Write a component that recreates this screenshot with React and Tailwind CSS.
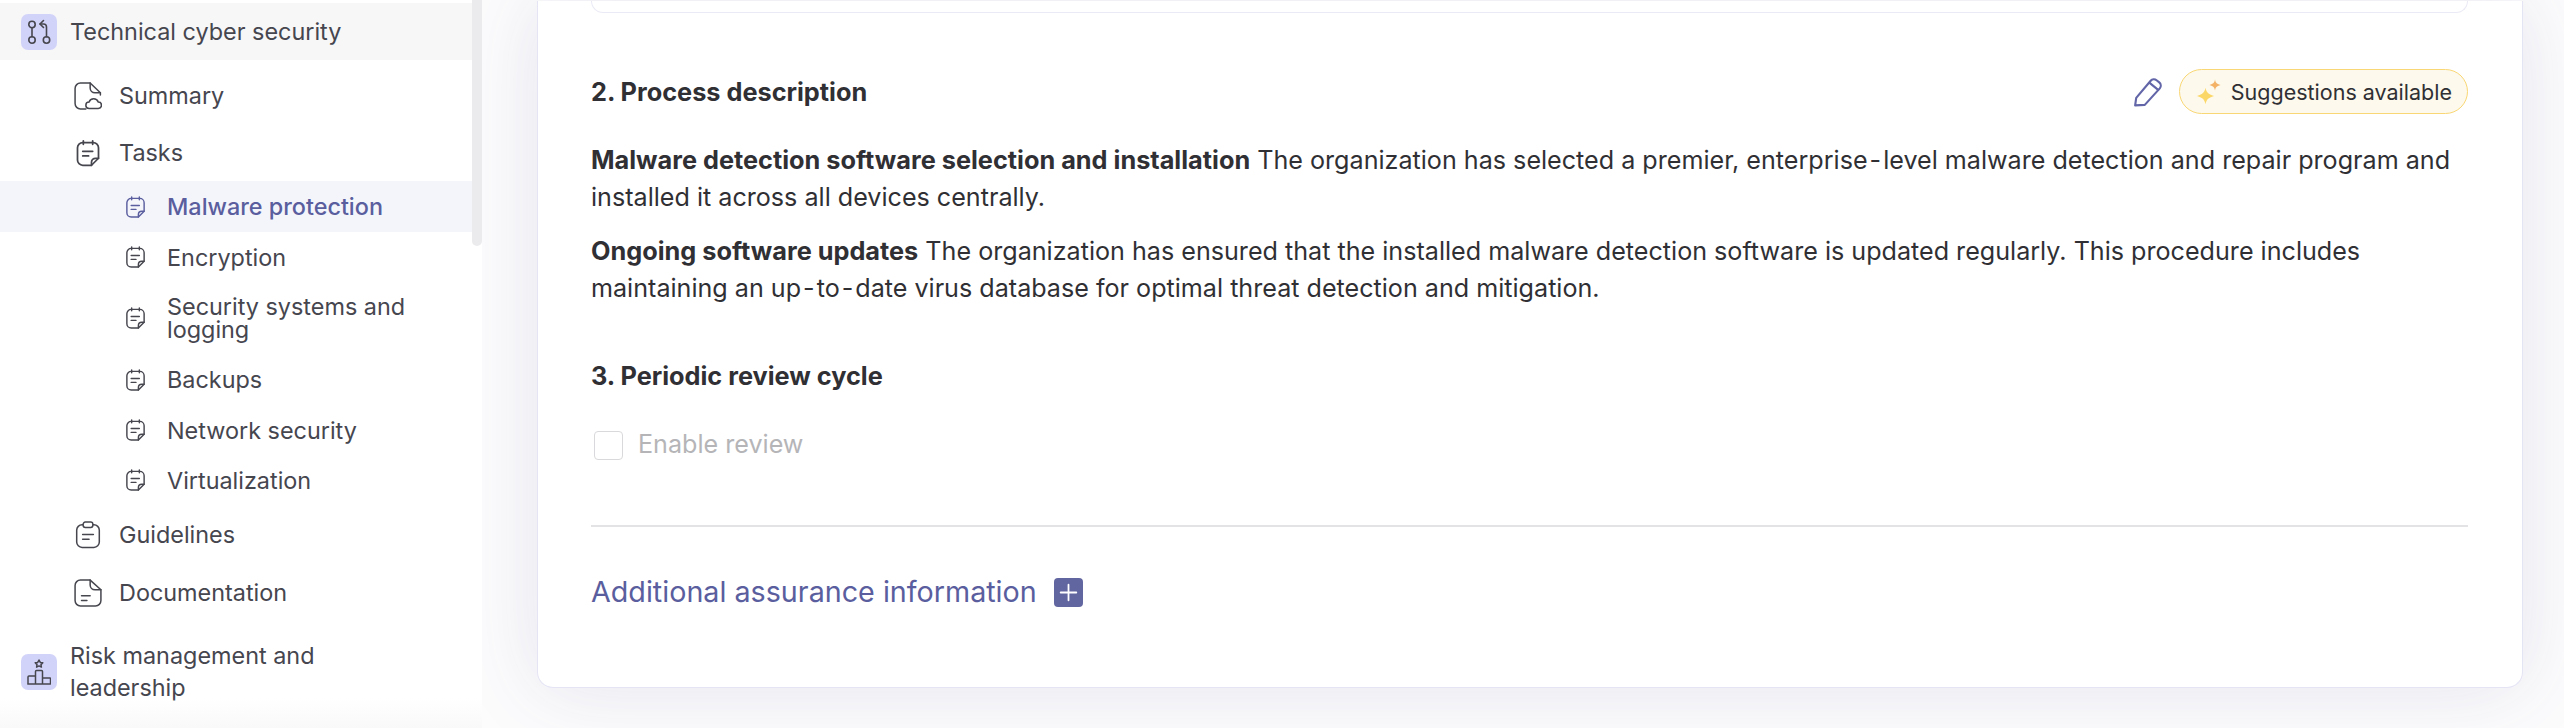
import React from 'react';

const NoteIcon = ({ className }) => (
  <svg className={className} viewBox="0 0 24 24" fill="none" stroke="currentColor" strokeWidth="1.5" strokeLinecap="round" strokeLinejoin="round">
    <path d="M8 1.500v3M16 1.500v3" />
    <path d="M15 22.500H7.500A4.500 4.500 0 0 1 3 18V7.500A4.500 4.500 0 0 1 7.500 3h9A4.500 4.500 0 0 1 21 7.500V16.500z" />
    <path d="M15 22.500v-2.500a3.500 3.500 0 0 1 3.500-3.500H21" />
    <path d="M7.500 10.500h8.500M7.500 14.500h5" />
  </svg>
);

const SummaryIcon = ({ className }) => (
  <svg className={className} viewBox="0 0 26 26" fill="none" stroke="currentColor" strokeWidth="1.4" strokeLinecap="round" strokeLinejoin="round">
    <path d="M11 25H6a5 5 0 0 1-5-5V6a5 5 0 0 1 5-5h9l9.500 9v2" />
    <path d="M15 1v4.500a4.500 4.500 0 0 0 4.500 4.500h5" />
    <path d="M14 24.500a3 3 0 0 1 0-6 4.500 4.500 0 0 1 8.500 0 3 3 0 0 1 0 6z" />
  </svg>
);

const ClipboardIcon = ({ className }) => (
  <svg className={className} viewBox="0 0 24 26" fill="none" stroke="currentColor" strokeWidth="1.4" strokeLinecap="round" strokeLinejoin="round">
    <rect x="1.500" y="3.500" width="21" height="21" rx="5" />
    <rect x="7.500" y="1" width="9" height="5" rx="2" fill="white" />
    <path d="M7 12.500h10M7 17h6" />
  </svg>
);

const DocIcon = ({ className }) => (
  <svg className={className} viewBox="0 0 26 26" fill="none" stroke="currentColor" strokeWidth="1.4" strokeLinecap="round" strokeLinejoin="round">
    <path d="M15 1H6a5 5 0 0 0-5 5v14a5 5 0 0 0 5 5h14a5 5 0 0 0 5-5V10z" />
    <path d="M15 1v4.500a4.500 4.500 0 0 0 4.500 4.500H25" />
    <path d="M7 15.500h8M7 20h5" />
  </svg>
);

const BranchIcon = () => (
  <svg className="w-[24px] h-[26px]" viewBox="0 0 24 26" fill="none" stroke="#46464f" strokeWidth="1.6" strokeLinecap="round" strokeLinejoin="round">
    <circle cx="5" cy="5.500" r="3.200" />
    <circle cx="5" cy="21" r="3.200" />
    <circle cx="19.500" cy="21" r="3.200" />
    <path d="M5 8.700v9" />
    <path d="M19.500 17.800V8a3 3 0 0 0-3-3H13" />
    <path d="M16.500 1.500 13 5l3.500 3.500" />
  </svg>
);

const PodiumIcon = () => (
  <svg className="w-[24px] h-[26px]" viewBox="0 0 24 26" fill="none" stroke="#46464f" strokeWidth="1.5" strokeLinecap="round" strokeLinejoin="round">
    <path d="m12 1 1.300 2.400 2.500.4-1.800 1.800.4 2.500-2.400-1.200-2.400 1.200.4-2.500-1.800-1.800 2.500-.4z" />
    <path d="M1 25v-7a1 1 0 0 1 1-1h6.500v8M8.500 25V12.500a1 1 0 0 1 1-1h5a1 1 0 0 1 1 1V25M15.500 19h7.500a1 1 0 0 1 .5 1v5M.8 25h22.900" />
  </svg>
);

const PencilIcon = () => (
  <svg className="w-[30px] h-[30px]" viewBox="0 0 28 28" fill="none" stroke="#6266a8" strokeWidth="2" strokeLinecap="round" strokeLinejoin="round">
    <path d="M2 26.500 3 19.500 16.500 3.500a4 4 0 0 1 5.500-.5l2.500 2a4 4 0 0 1 .5 5.600L11 26z" />
    <path d="m15.500 5.500 8 6.500" />
  </svg>
);

const SparkleIcon = () => (
  <svg className="w-[24px] h-[26px]" viewBox="0 0 24 26" aria-hidden="true">
    <path d="M8.500 8.500c.8 4.800 2.500 6.700 8.500 8.500-6 1.800-7.700 3.700-8.500 8.500C7.700 20.700 6 18.800 0 17c6-1.800 7.700-3.700 8.500-8.500z" fill="#fbd768" />
    <path d="M18 .5c.5 3.100 1.500 4.300 5.500 5.500-4 1.200-5 2.400-5.500 5.500-.5-3.100-1.500-4.300-5.500-5.500 4-1.200 5-2.400 5.500-5.500z" fill="#f4b266" />
  </svg>
);

const SidebarLink = ({ icon: Icon, label, className = '' }) => (
  <div className={`flex items-center pl-[74px] text-[#46464f] ${className}`}>
    <Icon className="w-[28px] h-[28px] shrink-0" />
    <span className="ml-[17px]">{label}</span>
  </div>
);

const TaskLink = ({ label, active = false, className = '' }) => (
  <div className={`flex items-center pl-[124px] ${active ? 'bg-[#f4f5fb] text-[#5a5e9e] font-medium' : 'text-[#46464f]'} ${className}`}>
    <NoteIcon className="w-[23px] h-[26px] shrink-0" />
    <span className="ml-[20px] leading-[23px]">{label}</span>
  </div>
);

const Sidebar = () => (
  <aside className="relative z-10 w-[482px] shrink-0 h-full bg-white text-[23.4px] pt-[3px]">
    <div className="flex items-center h-[57px] bg-[#f7f7f8] mr-[10px] pl-[21px] text-[#46464f]">
      <div className="w-[36px] h-[36px] rounded-[7px] bg-[#d2d3f9] flex items-center justify-center shrink-0">
        <BranchIcon />
      </div>
      <span className="ml-[13px]">Technical cyber security</span>
    </div>
    <div className="mr-[10px]">
      <SidebarLink icon={SummaryIcon} label="Summary" className="h-[57px] mt-[7px]" />
      <SidebarLink icon={NoteIcon} label="Tasks" className="h-[57px]" />
      <TaskLink label="Malware protection" active className="h-[51px]" />
      <TaskLink label="Encryption" className="h-[50px]" />
      <TaskLink label="Security systems and logging" className="h-[71px] pr-[50px]" />
      <TaskLink label="Backups" className="h-[51px] mt-[1px]" />
      <TaskLink label="Network security" className="h-[50px]" />
      <TaskLink label="Virtualization" className="h-[50px]" />
      <SidebarLink icon={ClipboardIcon} label="Guidelines" className="h-[58px] mt-[1px]" />
      <SidebarLink icon={DocIcon} label="Documentation" className="h-[58px]" />
      <div className="flex items-center pl-[21px] text-[#46464f] mt-[18px]">
        <div className="w-[36px] h-[36px] rounded-[7px] bg-[#d2d3f9] flex items-center justify-center shrink-0">
          <PodiumIcon />
        </div>
        <span className="ml-[13px] leading-[32px] w-[300px]">Risk management and leadership</span>
      </div>
    </div>
    {/* scrollbar */}
    <div className="absolute top-0 right-0 w-[10px] h-[246px] bg-[#ebebed] rounded-b-[5px]" />
    {/* fade at the bottom of the list */}
    <div className="absolute bottom-0 inset-x-0 h-[30px] bg-gradient-to-b from-transparent to-[#f9f9fa]" />
  </aside>
);

const Main = () => (
  <main className="flex-1 min-w-0 h-full flex flex-col justify-end bg-[#fcfcfd] pl-[55px] pr-[41px] pb-[40px] overflow-hidden">
    <section className="bg-white rounded-b-[16px] border border-t-0 border-[#e4e4f5] shadow-[0_0_80px_rgba(70,70,130,0.13)] pl-[53px] pr-[54px] pb-[75px] text-[25.13px] text-[#303034]">
      <div className="h-[12px] border border-t-0 border-[#eaeaf6] rounded-b-[14px]" />

      <div className="flex items-center justify-between mt-[56px]">
        <h2 className="font-bold leading-[34px] text-[25.3px]">2. Process description</h2>
        <div className="flex items-center gap-[16px]">
          <PencilIcon />
          <div className="flex items-center h-[45px] rounded-full border border-[#f9d774] bg-[#fdf9ec] pl-[17px] pr-[15px] text-[21.5px]">
            <SparkleIcon />
            <span className="ml-[10px]">Suggestions available</span>
          </div>
        </div>
      </div>

      <p className="mt-[27px] leading-[37px]">
        <strong className="font-bold text-[25.3px]">Malware detection software selection and installation</strong> The organization has selected a premier, enterprise<span className="mx-[2px]">-</span>level malware detection and repair program and installed it across all devices centrally.
      </p>
      <p className="mt-[16px] leading-[37px]">
        <strong className="font-bold text-[25.3px]">Ongoing software updates</strong> The organization has ensured that the installed malware detection software is updated regularly. This procedure includes maintaining an up<span className="mx-[2px]">-</span>to<span className="mx-[2px]">-</span>date virus database for optimal threat detection and mitigation.
      </p>

      <h2 className="font-bold leading-[34px] mt-[52px] text-[25.3px]">3. Periodic review cycle</h2>

      <label className="flex items-center mt-[33px] text-[#b5b5b8]">
        <span className="ml-[3px] w-[29px] h-[29px] rounded-[4px] border border-[#d9d9dc] bg-white" />
        <span className="ml-[15px]">Enable review</span>
      </label>

      <hr className="mt-[61px] border-t-2 border-[#e3e3e6]" />

      <div className="flex items-center mt-[45px] text-[#5a5e9e] text-[28.7px]">
        <span className="leading-[40px]">Additional assurance information</span>
        <span className="ml-[17px] w-[29px] h-[29px] rounded-[4px] bg-[#6266a0] flex items-center justify-center">
          <svg className="w-[19px] h-[19px]" viewBox="0 0 17 17" fill="none" stroke="white" strokeWidth="1.600" strokeLinecap="round">
            <path d="M8.500 1.500v14M1.500 8.500h14" />
          </svg>
        </span>
      </div>
    </section>
  </main>
);

const App = () => (
  <div className="flex w-[2564px] h-[728px] overflow-hidden bg-white font-['Inter','Liberation_Sans',sans-serif]">
    <Sidebar />
    <Main />
  </div>
);

export default App;
